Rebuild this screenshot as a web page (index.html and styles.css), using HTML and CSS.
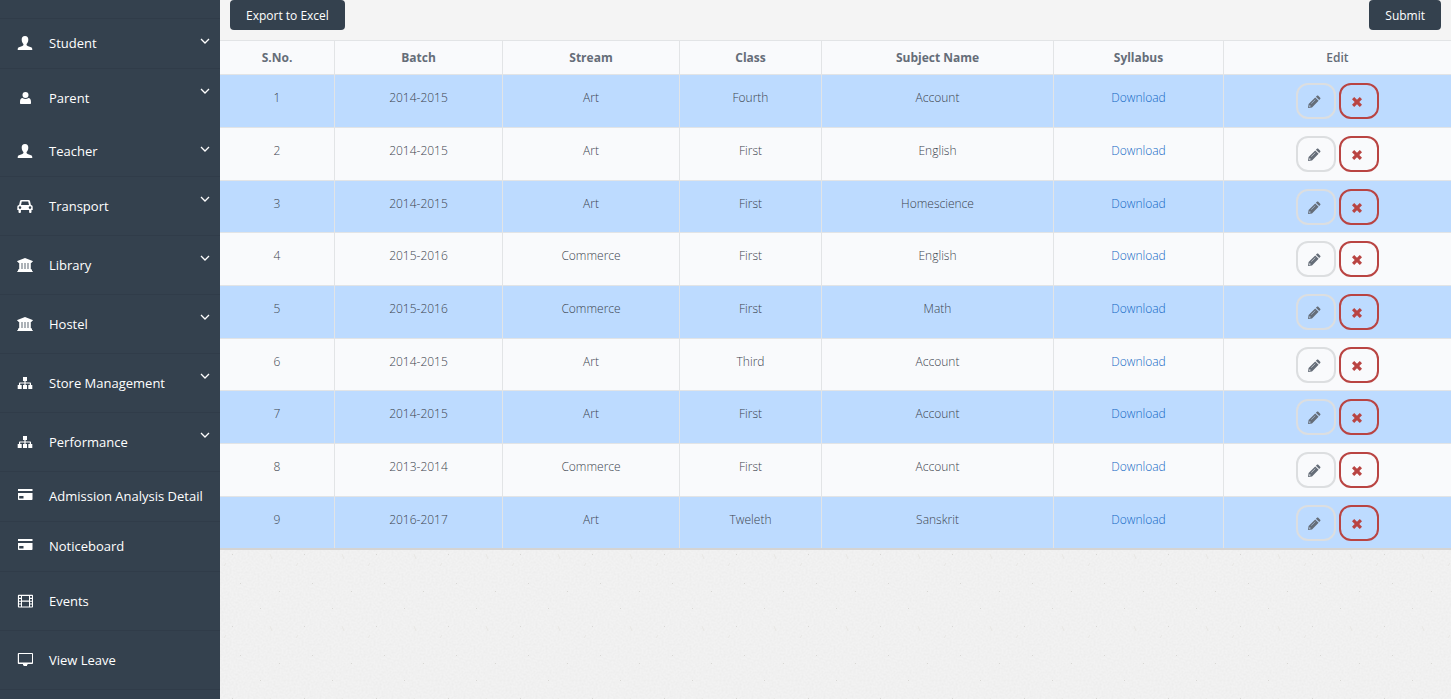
FILE: index.html
```html
<!DOCTYPE html>
<html lang="en">
<head>
<meta charset="utf-8">
<title>Syllabus</title>
<link rel="stylesheet" href="styles.css">
</head>
<body>
<svg class="sprite" aria-hidden="true">
  <symbol id="user" viewBox="0 0 16 16"><path d="M8 1C5.700 1 4.600 2.500 4.700 4.800c.1 2 .8 3.400 1.700 4.200.2.900-.1 1.500-1 1.900L2 12.300c-.9.400-1.300 1-1.300 2.700h14.600c0-1.700-.4-2.300-1.300-2.700l-3.400-1.400c-.9-.4-1.200-1-1-1.900.9-.8 1.600-2.200 1.700-4.200C11.400 2.500 10.300 1 8 1z"/></symbol>
  <symbol id="person" viewBox="0 0 16 16"><circle cx="8.500" cy="5" r="3"/><path d="M5.600 8C4 8 3 9.500 3 12v1.300c0 .5.300.7.700.7h9.600c.4 0 .7-.2.7-.7V12c0-2.500-1-4-2.600-4-1.700 1.300-4.100 1.300-5.800 0z"/></symbol>
  <symbol id="car" viewBox="0 0 16 16"><path fill-rule="evenodd" d="M4.500 2h7c.8 0 1.300.4 1.500 1.100L13.900 7c1 .1 1.800.9 1.800 1.900v3.200h-1.200V14c0 1.300-2.400 1.300-2.400 0v-1.900H3.900V14c0 1.300-2.400 1.300-2.400 0v-1.900H.3V8.900C.3 7.900 1.100 7.100 2.100 7L3 3.100C3.200 2.400 3.700 2 4.500 2zm.3 1.600L4 7h8l-.8-3.400zM3 8.300a1.300 1.300 0 1 0 0 2.600 1.300 1.300 0 0 0 0-2.600zm10 0a1.300 1.300 0 1 0 0 2.600 1.300 1.300 0 0 0 0-2.600z"/></symbol>
  <symbol id="bank" viewBox="0 0 16 16"><path d="M8 1l7.700 3v1h-1v1H1.300V5h-1V4zM2.200 6h2.400v6h.8V6h2.200v6h.8V6h2.200v6h.8V6h2.400v6h.8v1.200H1.400V12h.8zM1 13h14v1h.7v1H.3v-1H1z"/></symbol>
  <symbol id="tree" viewBox="0 0 16 16"><path d="M6 2h4v4H8.600v1.500H13c.6 0 1 .4 1 1V10h1.300v4h-4v-4h1.500V8.600H8.600V10H10v4H6v-4h1.400V8.600H3.200V10h1.500v4h-4v-4H2V8.500c0-.6.400-1 1-1h4.400V6H6z"/></symbol>
  <symbol id="card" viewBox="0 0 16 16"><path fill-rule="evenodd" d="M1 1h14.500v2H1zm0 4h14.500v6.200c0 .5-.3.800-.8.800H1.800c-.5 0-.8-.3-.8-.8zm1.200 3v2.500H6.500V8z"/></symbol>
  <symbol id="film" viewBox="0 0 16 16"><path fill-rule="evenodd" d="M1.700 1.700h13.500c.5 0 .8.300.8.800v11.200c0 .5-.3.800-.8.800H1.700c-.5 0-.8-.3-.8-.8V2.500c0-.5.300-.8.800-.8zM2 3v1.800h2V3zm3 0v4.500h7V3zm8 0v1.800h2V3zM2 5.900v1.800h2V5.900zm11 0v1.800h2V5.900zM2 8.700v1.700h2V8.700zm3 0v4.700h7V8.700zm8 0v1.700h2V8.700zM2 11.500v1.900h2v-1.900zm11 0v1.900h2v-1.900z"/></symbol>
  <symbol id="screen" viewBox="0 0 16 16"><path fill-rule="evenodd" d="M1.700 1h13.400c.5 0 .9.300.9.800v9.400c0 .5-.4.800-.9.800h-4.600v1H10v1H6.500v-1H6v-1H1.700c-.5 0-.9-.3-.9-.8V1.800c0-.5.400-.8.900-.8zm.3 1v8.500h13V2z"/></symbol>
  <symbol id="chevron" viewBox="0 0 10 10"><path d="M1 3l4 4 4-4" fill="none" stroke="currentColor" stroke-width="1.300"/></symbol>
  <symbol id="pencil" viewBox="0 0 14 14"><path fill-rule="evenodd" d="M1 13l.6-4L8.200 2.400l3.400 3.400L5 12.400zm1.300-2.200l-.2 1 .9-.1.700-.6-.8-.8zM8.900 1.800l1-1c.4-.4 1-.4 1.400 0l1.900 1.900c.4.400.4 1 0 1.400l-1 1zM8.200 4.400L4.100 8.500l.3.300 4.100-4.100z"/></symbol>
  <symbol id="cross" viewBox="0 0 14 14"><path d="M4.200 2L7 4.700 9.800 2l2.200 2.200L9.300 7l2.700 2.800L9.800 12 7 9.300 4.200 12 2 9.800 4.700 7 2 4.200z"/></symbol>
</svg>
<div class="layout">
  <nav class="sidebar" aria-label="Main">
    <a class="item" href="#"><svg class="icon"><use href="#user"/></svg><span class="label">Student</span><svg class="chevron"><use href="#chevron"/></svg></a>
    <a class="item tall plain" href="#"><svg class="icon"><use href="#person"/></svg><span class="label">Parent</span><svg class="chevron"><use href="#chevron"/></svg></a>
    <a class="item" href="#"><svg class="icon"><use href="#user"/></svg><span class="label">Teacher</span><svg class="chevron"><use href="#chevron"/></svg></a>
    <a class="item tall" href="#"><svg class="icon"><use href="#car"/></svg><span class="label">Transport</span><svg class="chevron"><use href="#chevron"/></svg></a>
    <a class="item tall" href="#"><svg class="icon"><use href="#bank"/></svg><span class="label">Library</span><svg class="chevron"><use href="#chevron"/></svg></a>
    <a class="item tall" href="#"><svg class="icon"><use href="#bank"/></svg><span class="label">Hostel</span><svg class="chevron"><use href="#chevron"/></svg></a>
    <a class="item tall" href="#"><svg class="icon"><use href="#tree"/></svg><span class="label">Store Management</span><svg class="chevron"><use href="#chevron"/></svg></a>
    <a class="item tall" href="#"><svg class="icon"><use href="#tree"/></svg><span class="label">Performance</span><svg class="chevron"><use href="#chevron"/></svg></a>
    <a class="item" href="#"><svg class="icon"><use href="#card"/></svg><span class="label">Admission Analysis Detail</span></a>
    <a class="item" href="#"><svg class="icon"><use href="#card"/></svg><span class="label">Noticeboard</span></a>
    <a class="item tall" href="#"><svg class="icon"><use href="#film"/></svg><span class="label">Events</span></a>
    <a class="item tall" href="#"><svg class="icon"><use href="#screen"/></svg><span class="label">View Leave</span></a>
  </nav>
  <main class="content">
    <section class="panel">
      <div class="toolbar">
        <button class="btn" type="button">Export to Excel</button>
        <button class="btn" type="submit">Submit</button>
      </div>
      <table class="grid">
        <colgroup><col class="c-no"><col class="c-batch"><col class="c-stream"><col class="c-class"><col class="c-subject"><col class="c-syllabus"><col class="c-edit"></colgroup>
        <thead>
          <tr><th>S.No.</th><th>Batch</th><th>Stream</th><th>Class</th><th>Subject Name</th><th>Syllabus</th><th class="light">Edit</th></tr>
        </thead>
        <tbody>
          <tr><td>1</td><td>2014-2015</td><td>Art</td><td>Fourth</td><td>Account</td><td><a href="#">Download</a></td><td class="actions"><button class="act" type="button" aria-label="Edit"><svg><use href="#pencil"/></svg></button><button class="act danger" type="button" aria-label="Delete"><svg><use href="#cross"/></svg></button></td></tr>
          <tr><td>2</td><td>2014-2015</td><td>Art</td><td>First</td><td>English</td><td><a href="#">Download</a></td><td class="actions"><button class="act" type="button" aria-label="Edit"><svg><use href="#pencil"/></svg></button><button class="act danger" type="button" aria-label="Delete"><svg><use href="#cross"/></svg></button></td></tr>
          <tr><td>3</td><td>2014-2015</td><td>Art</td><td>First</td><td>Homescience</td><td><a href="#">Download</a></td><td class="actions"><button class="act" type="button" aria-label="Edit"><svg><use href="#pencil"/></svg></button><button class="act danger" type="button" aria-label="Delete"><svg><use href="#cross"/></svg></button></td></tr>
          <tr><td>4</td><td>2015-2016</td><td>Commerce</td><td>First</td><td>English</td><td><a href="#">Download</a></td><td class="actions"><button class="act" type="button" aria-label="Edit"><svg><use href="#pencil"/></svg></button><button class="act danger" type="button" aria-label="Delete"><svg><use href="#cross"/></svg></button></td></tr>
          <tr><td>5</td><td>2015-2016</td><td>Commerce</td><td>First</td><td>Math</td><td><a href="#">Download</a></td><td class="actions"><button class="act" type="button" aria-label="Edit"><svg><use href="#pencil"/></svg></button><button class="act danger" type="button" aria-label="Delete"><svg><use href="#cross"/></svg></button></td></tr>
          <tr><td>6</td><td>2014-2015</td><td>Art</td><td>Third</td><td>Account</td><td><a href="#">Download</a></td><td class="actions"><button class="act" type="button" aria-label="Edit"><svg><use href="#pencil"/></svg></button><button class="act danger" type="button" aria-label="Delete"><svg><use href="#cross"/></svg></button></td></tr>
          <tr><td>7</td><td>2014-2015</td><td>Art</td><td>First</td><td>Account</td><td><a href="#">Download</a></td><td class="actions"><button class="act" type="button" aria-label="Edit"><svg><use href="#pencil"/></svg></button><button class="act danger" type="button" aria-label="Delete"><svg><use href="#cross"/></svg></button></td></tr>
          <tr><td>8</td><td>2013-2014</td><td>Commerce</td><td>First</td><td>Account</td><td><a href="#">Download</a></td><td class="actions"><button class="act" type="button" aria-label="Edit"><svg><use href="#pencil"/></svg></button><button class="act danger" type="button" aria-label="Delete"><svg><use href="#cross"/></svg></button></td></tr>
          <tr><td>9</td><td>2016-2017</td><td>Art</td><td>Tweleth</td><td>Sanskrit</td><td><a href="#">Download</a></td><td class="actions"><button class="act" type="button" aria-label="Edit"><svg><use href="#pencil"/></svg></button><button class="act danger" type="button" aria-label="Delete"><svg><use href="#cross"/></svg></button></td></tr>
        </tbody>
      </table>
    </section>
  </main>
</div>
</body>
</html>
```
FILE: styles.css
```css
* { box-sizing: border-box; }

body {
  margin: 0;
  font-family: "Open Sans", "Noto Sans", sans-serif;
  font-size: 12px;
  line-height: 18px;
  color: #656d78;
  background: #efefee;
}

.sprite { display: none; }

.layout { display: flex; min-height: 100vh; }

/* Sidebar */
.sidebar {
  flex: none;
  width: 220px;
  padding-top: 18px;
  background: #34414e;
}

.item {
  display: flex;
  align-items: center;
  gap: 16px;
  padding: 14px 10px 15px 17px;
  border-bottom: 1px solid #303c49;
  color: #fff;
  font-size: 13px;
  line-height: 20px;
  text-decoration: none;
}
.item:first-child { border-top: 1px solid #303c49; }
.item.tall { padding-top: 19px; padding-bottom: 19px; }
.item.plain { border-bottom: 0; }

.icon { flex: none; width: 16px; height: 16px; fill: #fff; }
.label { flex: 1; white-space: nowrap; }
.chevron { align-self: flex-start; width: 10px; height: 10px; margin-top: 3px; }
.tall .chevron { margin-top: -2px; }

/* Content */
.content {
  flex: 1;
  min-width: 0;
  background-image: url("data:image/svg+xml,%3Csvg xmlns='http://www.w3.org/2000/svg' width='72' height='72'%3E%3Cfilter id='n' x='0' y='0' width='100%25' height='100%25'%3E%3CfeTurbulence type='fractalNoise' baseFrequency='.5' numOctaves='3' stitchTiles='stitch'/%3E%3CfeColorMatrix values='0 0 0 0 .5 0 0 0 0 .5 0 0 0 0 .48 .2 0 0 0 -.07'/%3E%3C/filter%3E%3Crect width='72' height='72' fill='%23f2f2f2'/%3E%3Crect width='72' height='72' filter='url(%23n)'/%3E%3Cpath d='M20 7h1v1h-1zM40 32h1v1h-1zM59 15h1v1h-1zM12 50h1v1h-1z' fill='%23d8d7d4'/%3E%3Cpath d='M4 62l2-3M50 50l2 5' stroke='%23e8e7e4'/%3E%3C/svg%3E");
}

.panel { background: #f4f4f4; border-bottom: 2px solid #d5d4d3; }

.toolbar {
  display: flex;
  justify-content: space-between;
  padding: 0 10px 10px;
}

.btn {
  height: 30px;
  padding: 1px 16px 0;
  border: 0;
  border-radius: 4px;
  background: #34414e;
  color: #fff;
  font: inherit;
}

.grid {
  width: 100%;
  table-layout: fixed;
  border-collapse: separate;
  border-spacing: 0;
  background: #f9fafc;
}
.c-no { width: 115px; }
.c-batch { width: 168px; }
.c-stream { width: 177px; }
.c-class { width: 142px; }
.c-subject { width: 232px; }
.c-syllabus { width: 170px; }
.c-edit { width: 227px; }

.grid th,
.grid td {
  padding: 8px 8px 7px;
  border-top: 1px solid #e2e4e6;
  border-right: 1px solid #e2e4e6;
  text-align: center;
  vertical-align: top;
}
.grid th:last-child,
.grid td:last-child { border-right: 0; }
.grid th { font-weight: 700; }
.grid th.light { font-weight: 600; }

.grid td { height: 53px; padding: 14px 8px 0; font-weight: 300; color: #3c444e; }
.grid tr:nth-child(3n) td { height: 52px; }
.grid tbody tr:nth-child(odd) { background: #bddbff; }
.grid a { color: #1268c4; text-decoration: none; }

.grid td.actions { padding: 8px 0 0; font-size: 0; }

.act {
  width: 40px;
  height: 36px;
  padding: 0 4px 0 0;
  border: 2px solid #dcdee0;
  border-radius: 12px;
  background: transparent;
  color: #656d78;
}
.act + .act { margin-left: 3px; }
.act svg { width: 14px; height: 14px; fill: currentColor; vertical-align: middle; }
.act.danger { border-color: #b94442; color: #b94442; }
```
